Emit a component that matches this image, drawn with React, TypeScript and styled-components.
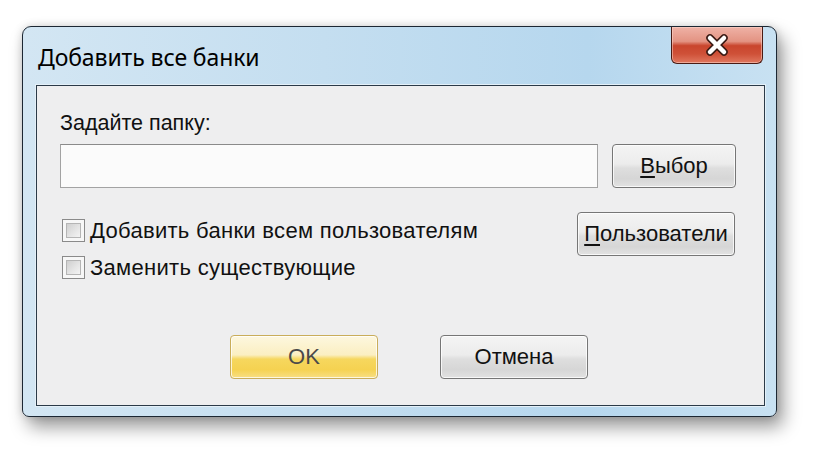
import React from "react";
import styled, { createGlobalStyle } from "styled-components";

const GlobalStyle = createGlobalStyle`
  html, body {
    margin: 0;
    padding: 0;
    background: #ffffff;
  }
  body {
    width: 820px;
    height: 462px;
    overflow: hidden;
    font-family: "Liberation Sans", Arial, sans-serif;
  }
`;

const Page = styled.div`
  padding: 26px 0 0 22px;
`;

const Window = styled.div`
  width: 755px;
  height: 391px;
  box-sizing: border-box;
  border: 1px solid #1c2733;
  border-radius: 9px 9px 7px 7px;
  background: linear-gradient(90deg, #d3e6f3 0%, #c4def0 40%, #b6d7ee 75%, #c8e1f2 100%);
  box-shadow: 6px 10px 18px rgba(0, 0, 0, 0.4), 0 0 8px rgba(0, 0, 0, 0.15);
  display: flex;
  flex-direction: column;
`;

const TitleBar = styled.div`
  height: 58px;
  display: flex;
  align-items: flex-start;
  padding-left: 15px;
  padding-right: 13px;
`;

const Title = styled.div`
  flex: 1;
  padding-top: 14px;
  font-family: "Noto Sans", "Open Sans", sans-serif;
  font-size: 23px;
  color: #000;
  letter-spacing: -0.1px;
`;

const CloseButton = styled.div`
  width: 92px;
  height: 37px;
  box-sizing: border-box;
  border: 1px solid #4a1b14;
  border-top: none;
  border-radius: 0 0 6px 6px;
  background: linear-gradient(180deg, #efb2a6 0%, #e39382 40%, #c9452d 52%, #cf5138 75%, #e07860 100%);
  box-shadow: inset 0 0 0 1px rgba(255, 220, 210, 0.5);
  display: flex;
  align-items: center;
  justify-content: center;
`;

const Client = styled.div`
  flex: 1;
  margin: 0 11px 10px 13px;
  border: 1px solid #2b3a48;
  background: #eeeeef;
  box-shadow: 0 0 0 1px #e4f0f8;
  padding: 25px 0 0 23px;
  display: flex;
  flex-direction: column;
`;

const Label = styled.div`
  font-size: 21.5px;
  color: #111;
  height: 33px;
`;

const FolderRow = styled.div`
  display: flex;
  gap: 14px;
  align-items: center;
`;

const PathInput = styled.div`
  width: 538px;
  height: 44px;
  box-sizing: border-box;
  background: #fbfbfb;
  border: 1px solid #a3a3a3;
  border-top-color: #8a8a8a;
`;

const Button = styled.div<{ $w: number; $primary?: boolean }>`
  width: ${(p) => p.$w}px;
  height: 44px;
  box-sizing: border-box;
  border: 1px solid ${(p) => (p.$primary ? "#c9ad5a" : "#767676")};
  border-radius: 4px;
  background: ${(p) =>
    p.$primary
      ? "linear-gradient(180deg, #fdf7df 0%, #fbefc2 45%, #f6d75e 55%, #f5d251 80%, #f8df84 100%)"
      : "linear-gradient(180deg, #f4f4f4 0%, #ececec 45%, #dedede 55%, #d6d6d6 80%, #e2e2e2 100%)"};
  box-shadow: inset 0 0 0 1px rgba(255, 255, 255, 0.75);
  display: flex;
  align-items: center;
  justify-content: center;
  font-size: 22px;
  color: ${(p) => (p.$primary ? "#4a4a4a" : "#111")};
  white-space: nowrap;
`;

const Key = styled.span`
  text-decoration: underline;
  text-underline-offset: 3px;
`;

const OptionsRow = styled.div`
  display: flex;
  justify-content: space-between;
  margin-top: 24px;
  padding-right: 29px;
`;

const Checks = styled.div`
  display: flex;
  flex-direction: column;
  gap: 14px;
  padding-top: 7px;
  padding-left: 2px;
`;

const CheckRow = styled.div`
  display: flex;
  align-items: center;
  gap: 5px;
  font-size: 22px;
  letter-spacing: 0.3px;
  color: #111;
  height: 23px;
  white-space: nowrap;
`;

const Box = styled.div`
  width: 23px;
  height: 23px;
  flex: none;
  box-sizing: border-box;
  border: 1px solid #8a8a8a;
  background: #f7f7f7;
  padding: 3px;
  &::after {
    content: "";
    display: block;
    width: 100%;
    height: 100%;
    box-sizing: border-box;
    border: 1px solid #b5b5b5;
    background: linear-gradient(135deg, #cfcfcf 0%, #e6e6e6 60%, #f3f3f3 100%);
  }
`;

const Footer = styled.div`
  display: flex;
  gap: 62px;
  margin-top: 56px;
  padding-left: 170px;
`;

const CloseGlyph = () => (
  <svg width="28" height="24" viewBox="0 0 28 24">
    <path d="M7 5 L21 19 M21 5 L7 19" stroke="#3a1a14" strokeWidth="7.5" strokeLinecap="round" />
    <path d="M7 5 L21 19 M21 5 L7 19" stroke="#ffffff" strokeWidth="4.5" strokeLinecap="round" />
  </svg>
);

const App: React.FC = () => {
  return (
    <Page>
      <GlobalStyle />
      <Window>
        <TitleBar>
          <Title>Добавить все банки</Title>
          <CloseButton>
            <CloseGlyph />
          </CloseButton>
        </TitleBar>
        <Client>
          <Label>Задайте папку:</Label>
          <FolderRow>
            <PathInput />
            <Button $w={124}>
              <span>
                <Key>В</Key>ыбор
              </span>
            </Button>
          </FolderRow>
          <OptionsRow>
            <Checks>
              <CheckRow>
                <Box />
                Добавить банки всем пользователям
              </CheckRow>
              <CheckRow>
                <Box />
                Заменить существующие
              </CheckRow>
            </Checks>
            <Button $w={158}>
              <span>
                <Key>П</Key>ользователи
              </span>
            </Button>
          </OptionsRow>
          <Footer>
            <Button $w={148} $primary>
              OK
            </Button>
            <Button $w={148}>Отмена</Button>
          </Footer>
        </Client>
      </Window>
    </Page>
  );
};

export default App;
